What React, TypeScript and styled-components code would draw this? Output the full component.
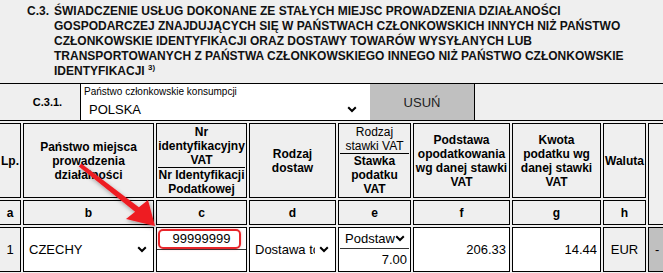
import { FC } from "react";
import styled, { createGlobalStyle } from "styled-components";

const GlobalStyle = createGlobalStyle`
  html, body {
    margin: 0;
    padding: 0;
    overflow: hidden;
    background: #efefef;
    font-family: "Liberation Sans", Arial, sans-serif;
    color: #000;
  }
`;

const Chevron: FC = () => (
  <ChevronIcon viewBox="0 0 10 7" width={10} height={7}>
    <path d="M1.2 1.2 L5 5 L8.8 1.2" fill="none" stroke="#000" strokeWidth={2} />
  </ChevronIcon>
);

const Arrow: FC = () => (
  <ArrowLayer width={663} height={273} viewBox="0 0 663 273">
    <defs>
      <filter id="arrowShadow" x="-20%" y="-20%" width="140%" height="140%">
        <feDropShadow dx="1" dy="2" stdDeviation="2" floodColor="#000" floodOpacity="0.35" />
      </filter>
    </defs>
    <polygon
      points="81.3,163.4 138.9,207.2 148,200 155,226 126,219 135.1,211.8 78.7,166.6"
      fill="#ee1c24"
      filter="url(#arrowShadow)"
    />
  </ArrowLayer>
);

const App: FC = () => {
  return (
    <Page>
      <GlobalStyle />
      <SectionHeader>
        <SectionNo>C.3.</SectionNo>
        <SectionTitle>
          <TitleLine>ŚWIADCZENIE USŁUG DOKONANE ZE STAŁYCH MIEJSC PROWADZENIA DZIAŁANOŚCI</TitleLine>
          <TitleLine>GOSPODARCZEJ ZNAJDUJĄCYCH SIĘ W PAŃSTWACH CZŁONKOWSKICH INNYCH NIŻ PAŃSTWO</TitleLine>
          <TitleLine>CZŁONKOWSKIE IDENTYFIKACJI ORAZ DOSTAWY TOWARÓW WYSYŁANYCH LUB</TitleLine>
          <TitleLine>TRANSPORTOWANYCH Z PAŃSTWA CZŁONKOWSKIEGO INNEGO NIŻ PAŃSTWO CZŁONKOWSKIE</TitleLine>
          <TitleLine>
            IDENTYFIKACJI <Sup>3)</Sup>
          </TitleLine>
        </SectionTitle>
      </SectionHeader>

      <CountryRow>
        <CountryCode>C.3.1.</CountryCode>
        <CountryField>
          <FieldLabel>Państwo członkowskie konsumpcji</FieldLabel>
          <SelectWrap>
            <CountrySelect defaultValue="PL">
              <option value="PL">POLSKA</option>
            </CountrySelect>
            <Chevron />
          </SelectWrap>
        </CountryField>
        <DeleteButton>USUŃ</DeleteButton>
      </CountryRow>

      <DataTable>
        <colgroup>
          <col style={{ width: 22 }} />
          <col style={{ width: 131 }} />
          <col style={{ width: 91 }} />
          <col style={{ width: 87 }} />
          <col style={{ width: 73 }} />
          <col style={{ width: 97 }} />
          <col style={{ width: 89 }} />
          <col style={{ width: 43 }} />
          <col style={{ width: 30 }} />
        </colgroup>
        <thead>
          <HeadRow>
            <HeadCell>Lp.</HeadCell>
            <HeadCell>
              Państwo miejsca
              <br />
              prowadzenia
              <br />
              działalności
            </HeadCell>
            <HeadCell>
              <SplitTop>
                Nr
                <br />
                identyfikacyjny
                <br />
                VAT
              </SplitTop>
              <SplitBottom>
                Nr Identyfikacji
                <br />
                Podatkowej
              </SplitBottom>
            </HeadCell>
            <HeadCell>
              Rodzaj
              <br />
              dostaw
            </HeadCell>
            <HeadCell>
              <SplitTop $light>
                Rodzaj
                <br />
                stawki VAT
              </SplitTop>
              <SplitBottom>
                Stawka
                <br />
                podatku
                <br />
                VAT
              </SplitBottom>
            </HeadCell>
            <HeadCell>
              Podstawa
              <br />
              opodatkowania
              <br />
              wg danej stawki
              <br />
              VAT
            </HeadCell>
            <HeadCell>
              Kwota
              <br />
              podatku wg
              <br />
              danej stawki
              <br />
              VAT
            </HeadCell>
            <HeadCell>Waluta</HeadCell>
            <HeadCell rowSpan={2} />
          </HeadRow>
          <LetterRow>
            {["a", "b", "c", "d", "e", "f", "g", "h"].map((l) => (
              <HeadCell key={l}>{l}</HeadCell>
            ))}
          </LetterRow>
        </thead>
        <tbody>
          <BodyRow>
            <BodyCell $gray>1</BodyCell>
            <BodyCell>
              <SelectWrap>
                <CellSelect defaultValue="CZ">
                  <option value="CZ">CZECHY</option>
                </CellSelect>
                <Chevron />
              </SelectWrap>
            </BodyCell>
            <BodyCell $top>
              <NipInput defaultValue="99999999" />
              <Highlight />
            </BodyCell>
            <BodyCell>
              <SelectWrap $padRight={6}>
                <CellSelect defaultValue="D" $padRight={4}>
                  <option value="D">Dostawa towarów</option>
                </CellSelect>
                <Chevron />
              </SelectWrap>
            </BodyCell>
            <BodyCell $top>
              <RateSelectWrap>
                <CellSelect defaultValue="P">
                  <option value="P">Podstawowa</option>
                </CellSelect>
                <Chevron />
              </RateSelectWrap>
              <AmountInput defaultValue="7.00" $small />
            </BodyCell>
            <BodyCell>
              <AmountInput defaultValue="206.33" />
            </BodyCell>
            <BodyCell>
              <AmountInput defaultValue="14.44" />
            </BodyCell>
            <BodyCell $gray>EUR</BodyCell>
            <BodyCell $button>-</BodyCell>
          </BodyRow>
        </tbody>
      </DataTable>
      <Arrow />
    </Page>
  );
};

export default App;

const Page = styled.div`
  position: relative;
  width: 663px;
  height: 273px;
  overflow: hidden;
`;

const SectionHeader = styled.div`
  display: flex;
  height: 83px;
  box-sizing: border-box;
  padding: 4px 0 0 27px;
  font-family: "Liberation Sans", Arial, sans-serif;
  font-weight: bold;
  font-size: 12px;
  line-height: 15px;
  color: #111;
`;

const SectionNo = styled.div`
  width: 27px;
`;

const SectionTitle = styled.div``;

const TitleLine = styled.div`
  white-space: nowrap;
`;

const Sup = styled.sup`
  font-size: 8px;
  line-height: 0;
`;

const CountryRow = styled.div`
  display: flex;
  height: 38px;
  box-sizing: border-box;
  border-top: 1px solid #000;
  border-bottom: 1px solid #000;
`;

const CountryCode = styled.div`
  width: 81px;
  box-sizing: border-box;
  padding-left: 15px;
  border-right: 1px solid #000;
  display: flex;
  align-items: center;
  justify-content: center;
  font-size: 11px;
  font-weight: bold;
`;

const CountryField = styled.div`
  width: 289px;
  box-sizing: border-box;
  background: #fff;
  padding: 2px 7px 0 3px;
  display: flex;
  flex-direction: column;
`;

const FieldLabel = styled.div`
  font-size: 10px;
  line-height: 12px;
`;

const SelectWrap = styled.div<{ $padRight?: number }>`
  display: flex;
  align-items: center;
  padding-right: ${({ $padRight }) => $padRight ?? 6}px;
  height: 100%;
  box-sizing: border-box;
`;

const ChevronIcon = styled.svg`
  flex: none;
  display: block;
`;

const BaseSelect = styled.select<{ $padRight?: number }>`
  appearance: none;
  -webkit-appearance: none;
  border: none;
  background: transparent;
  outline: none;
  font-family: "Liberation Sans", Arial, sans-serif;
  font-size: 13px;
  color: #000;
  flex: 1;
  min-width: 0;
  padding: 0;
  margin: 0 ${({ $padRight }) => $padRight ?? 0}px 0 0;
`;

const CountrySelect = styled(BaseSelect)`
  padding-left: 5px;
  height: 20px;
`;

const CellSelect = styled(BaseSelect)`
  padding-left: 5px;
`;

const DeleteButton = styled.div`
  width: 105px;
  box-sizing: border-box;
  background: #c0c0c0;
  border-right: 1px solid #000;
  display: flex;
  align-items: center;
  justify-content: center;
  font-size: 13px;
  color: #222;
`;

const DataTable = styled.table`
  table-layout: fixed;
  width: 683px;
  margin-left: -3px;
  border-collapse: separate;
  border-spacing: 2px;
  font-family: "Liberation Sans", Arial, sans-serif;
`;

const HeadRow = styled.tr`
  height: 75px;
`;

const LetterRow = styled.tr`
  height: 25px;
`;

const BodyRow = styled.tr`
  height: 45px;
`;

const HeadCell = styled.th`
  box-sizing: border-box;
  border: 1px solid #000;
  padding: 0;
  font-size: 12px;
  line-height: 14px;
  font-weight: bold;
  text-align: center;
  vertical-align: middle;
  background: #efefef;
`;

const SplitTop = styled.div<{ $light?: boolean }>`
  font-weight: ${({ $light }) => ($light ? "normal" : "bold")};
  border-bottom: 1px solid #000;
  margin: 0 1px;
`;

const SplitBottom = styled.div``;

const BodyCell = styled.td<{ $gray?: boolean; $top?: boolean; $button?: boolean }>`
  position: relative;
  box-sizing: border-box;
  border: 1px solid #000;
  padding: ${({ $button }) => ($button ? "0 0 0 6px" : "0")};
  text-align: ${({ $button }) => ($button ? "left" : "center")};
  vertical-align: ${({ $top }) => ($top ? "top" : "middle")};
  background: ${({ $gray, $button }) => ($button ? "#c0c0c0" : $gray ? "#efefef" : "#fff")};
  font-size: 13px;
`;

const NipInput = styled.input`
  display: block;
  width: 100%;
  box-sizing: border-box;
  height: 22px;
  border: none;
  border-bottom: 1px solid #333;
  background: transparent;
  outline: none;
  text-align: center;
  font-family: "Liberation Sans", Arial, sans-serif;
  font-size: 13px;
  padding: 0;
`;

const Highlight = styled.div`
  position: absolute;
  left: 1px;
  top: 1px;
  width: 83px;
  height: 20px;
  box-sizing: border-box;
  border: 2px solid #e8262b;
  border-radius: 5px;
  box-shadow: 0 0 3px rgba(232, 38, 43, 0.35);
  pointer-events: none;
`;

const RateSelectWrap = styled(SelectWrap)`
  height: 21px;
  margin: 0 1px;
  border-bottom: 1px solid #333;
  padding-right: 4px;
`;

const AmountInput = styled.input<{ $small?: boolean }>`
  display: block;
  width: 100%;
  box-sizing: border-box;
  height: ${({ $small }) => ($small ? "21px" : "43px")};
  border: none;
  background: transparent;
  outline: none;
  text-align: right;
  padding: 0 3px 0 0;
  font-family: "Liberation Sans", Arial, sans-serif;
  font-size: 13px;
  color: #000;
`;

const ArrowLayer = styled.svg`
  position: absolute;
  left: 0;
  top: 0;
  pointer-events: none;
`;
